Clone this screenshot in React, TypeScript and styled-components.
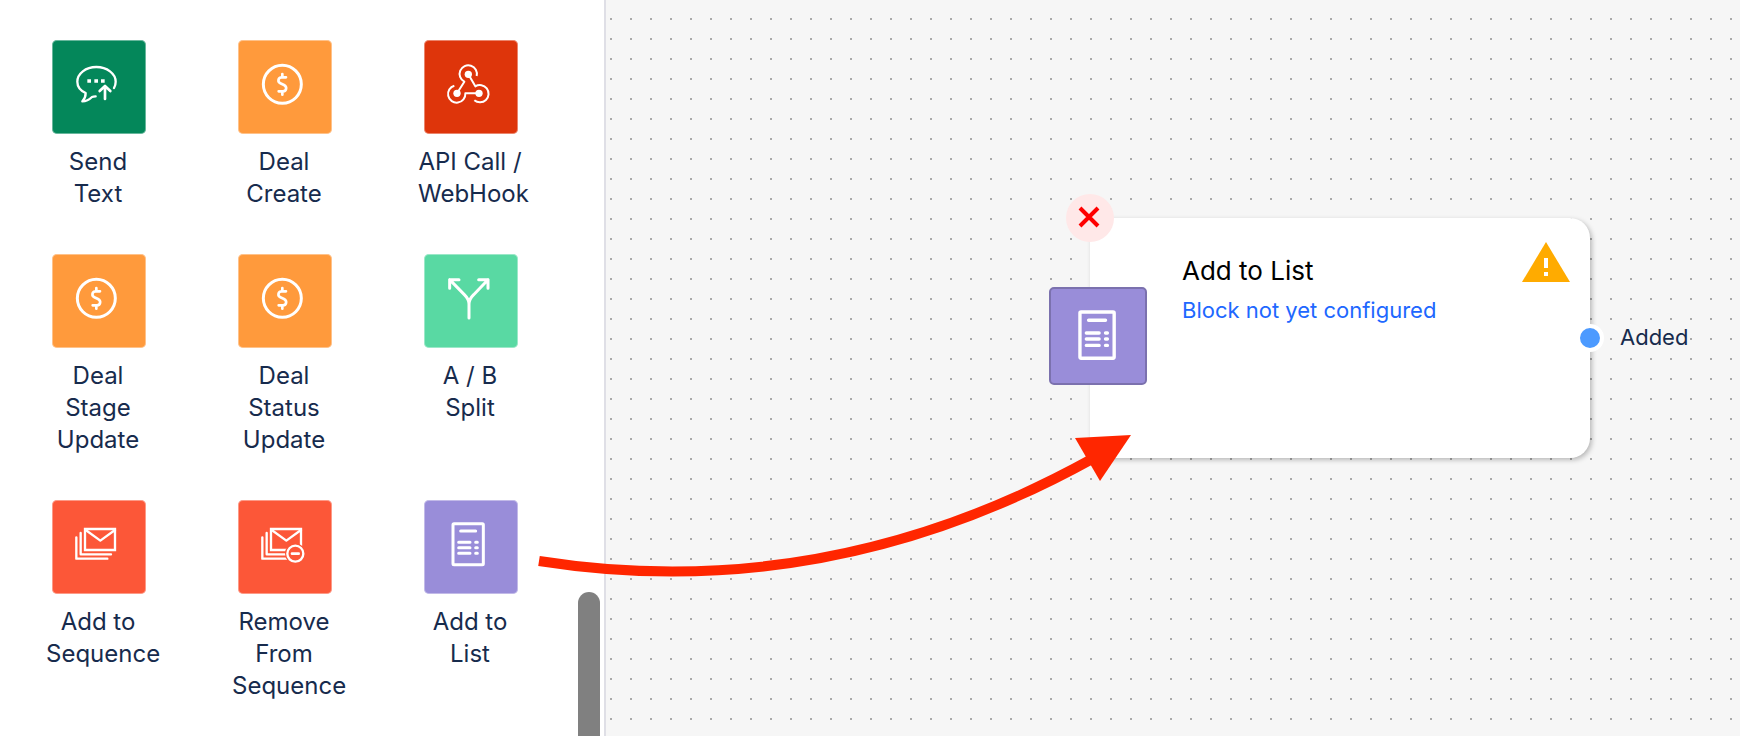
import React from "react";
import styled, { createGlobalStyle } from "styled-components";

const GlobalStyle = createGlobalStyle`
  *, *::before, *::after { box-sizing: border-box; }
  body {
    margin: 0;
    background: #ffffff;
    color: #172b4d;
    font-family: Inter, "Liberation Sans", sans-serif;
    font-size: 24px;
    line-height: 32px;
  }
`;

const Page = styled.div`
  position: relative;
  display: flex;
  min-height: 100vh;
  overflow: hidden;
`;

const Sidebar = styled.aside`
  display: flex;
  flex: none;
  justify-content: space-between;
  width: 606px;
  padding-right: 4px;
  border-right: 2px solid #dfdfe6;
  background: #ffffff;
`;

const BlockGrid = styled.ul`
  display: grid;
  grid-template-columns: repeat(3, 106px);
  align-content: start;
  gap: 44px 80px;
  margin: 0;
  padding: 40px 0 32px 46px;
  list-style: none;
`;

const BlockButton = styled.button`
  display: flex;
  flex-direction: column;
  align-items: center;
  gap: 12px;
  width: 100%;
  padding: 0;
  border: 0;
  background: none;
  color: inherit;
  font: inherit;
  cursor: grab;
`;

const Tile = styled.span<{ $color: string }>`
  display: block;
  width: 94px;
  height: 94px;
  border-radius: 5px;
  background: ${(p) => p.$color};
  box-shadow: inset 0 0 0 1px rgba(255, 255, 255, 0.4);
`;

const BlockLabel = styled.span`
  display: block;
  width: 100%;
  padding-right: 2px;
  text-align: center;
  white-space: pre;
`;

const ScrollThumb = styled.div`
  align-self: flex-end;
  width: 22px;
  height: 144px;
  border-radius: 11px 11px 0 0;
  background: #808080;
`;

const Canvas = styled.main`
  position: relative;
  flex: 1;
  min-width: 0;
  background-color: #f6f6f6;
  background-image: conic-gradient(from 270deg at 2px 2px, #aaaaaa 90deg, transparent 0);
  background-position: 4px 18px;
  background-size: 20px 20px;
`;

const Node = styled.section`
  position: absolute;
  top: 218px;
  left: 484px;
  display: flex;
  justify-content: space-between;
  width: 500px;
  height: 240px;
  padding: 24px 20px 24px 92px;
  border-radius: 20px;
  background: #ffffff;
  box-shadow: 2px 2px 5px rgba(0, 0, 0, 0.25);
`;

const NodeText = styled.div`
  display: flex;
  flex-direction: column;
  gap: 6px;
  padding-top: 12px;
`;

const NodeTitle = styled.h2`
  margin: 0;
  color: #000000;
  font-size: 26px;
  font-weight: 400;
  line-height: 34px;
`;

const NodeStatus = styled.p`
  margin: 0;
  color: #2067ff;
  font-size: 22px;
`;

const NodeTile = styled.div`
  position: absolute;
  top: 69px;
  left: -41px;
  width: 98px;
  height: 98px;
  border: 2px solid #7b71ae;
  border-radius: 5px;
  background: #998dd9;
`;

const RemoveButton = styled.button`
  position: absolute;
  top: -24px;
  left: -24px;
  width: 48px;
  height: 48px;
  padding: 0;
  border: 0;
  border-radius: 50%;
  background: #ffe8e8;
  cursor: pointer;
`;

const Port = styled.span`
  position: absolute;
  top: 106px;
  right: -14px;
  width: 28px;
  height: 28px;
  border: 4px solid #ffffff;
  border-radius: 50%;
  background: #4c9aff;
`;

const PortLabel = styled.span`
  position: absolute;
  top: 103px;
  left: 530px;
  background: #f6f6f6;
  font-size: 22px;
`;

const ArrowLayer = styled.svg`
  position: absolute;
  top: 0;
  left: 0;
  pointer-events: none;
`;

const Drawing = styled.svg`
  display: block;
  fill: none;
  stroke: #ffffff;
  stroke-linecap: round;
  stroke-linejoin: round;
`;

type IconName = "text" | "deal" | "webhook" | "split" | "sequence" | "unsequence" | "list";

const envelopes = (
  <g strokeWidth="7">
    <path d="M99 87H189V150H99Z" strokeLinejoin="miter" />
    <path d="M101 90L145 122L189 90" />
    <path d="M86 99V163H177" />
    <path d="M73 112V176H166" />
  </g>
);

const shapes: Record<IconName, React.ReactNode> = {
  text: (
    <g strokeWidth="7">
      <path d="M186 144Q191 135 191 125C191 101 165 81 133 81S76 101 76 125C76 140 86 152 101 159Q101 174 91 184Q107 184 120 171Q124 169 131 169" />
      <path d="M159 177V139M143 153L159 138L175 153" strokeWidth="8" />
      <path d="M106 118h11v10h-11zM127 118h11v10h-11zM147 118h11v10h-11z" fill="#ffffff" stroke="none" />
    </g>
  ),
  deal: (
    <g>
      <circle cx="133" cy="133" r="57" strokeWidth="9" />
      <path
        d="M133 102V111M144 112H131C120 112 118 126 127 130L138 135C148 140 146 154 135 154H122M133 156V164"
        strokeWidth="8"
      />
    </g>
  ),
  webhook: (
    <g strokeWidth="6" strokeLinecap="butt">
      <path d="M158 108A26 26 0 1 0 121 125L99 160" />
      <path d="M91 137A26 26 0 1 0 124 160H165" />
      <path d="M151 181A26 26 0 1 0 154 139L133 103" />
      <g fill="#ffffff" stroke="none">
        <circle cx="133" cy="103" r="11" />
        <circle cx="99" cy="160" r="11" />
        <circle cx="165" cy="160" r="11" />
      </g>
    </g>
  ),
  split: (
    <path
      d="M135 192V150C135 137 129 130 121 122L77 77M105 77H77V103M135 150C135 137 141 130 149 122L192 77M164 77H192V103"
      strokeWidth="9"
    />
  ),
  sequence: envelopes,
  unsequence: (
    <g>
      {envelopes}
      <circle cx="172" cy="161" r="31" fill="#fc5738" stroke="none" />
      <circle cx="172" cy="161" r="24" strokeWidth="7" />
      <path d="M162 161H182" strokeWidth="8" />
    </g>
  ),
  list: (
    <g strokeWidth="9">
      <rect x="87" y="71" width="91" height="123" rx="3" />
      <path d="M110 93H155M104 127H138M104 143H138M104 160H138M155 127H160M155 143H160M155 160H160" />
    </g>
  ),
};

const Icon = ({ name, viewBox = "0 0 282 282" }: { name: IconName; viewBox?: string }) => (
  <Drawing width="94" height="94" viewBox={viewBox} aria-hidden="true">
    {shapes[name]}
  </Drawing>
);

const blocks: { label: string; color: string; icon: IconName }[] = [
  { label: "Send\nText", color: "#04875a", icon: "text" },
  { label: "Deal\nCreate", color: "#ff9a3c", icon: "deal" },
  { label: "API Call /\nWebHook", color: "#de350b", icon: "webhook" },
  { label: "Deal\nStage\nUpdate", color: "#ff9a3c", icon: "deal" },
  { label: "Deal\nStatus\nUpdate", color: "#ff9a3c", icon: "deal" },
  { label: "A / B\nSplit", color: "#59d9a3", icon: "split" },
  { label: "Add to\nSequence", color: "#fc5738", icon: "sequence" },
  { label: "Remove\nFrom\nSequence", color: "#fc5738", icon: "unsequence" },
  { label: "Add to\nList", color: "#998dd9", icon: "list" },
];

export default function App() {
  return (
    <>
      <GlobalStyle />
      <Page>
        <Sidebar>
          <BlockGrid>
            {blocks.map((block) => (
              <li key={block.label}>
                <BlockButton type="button">
                  <Tile $color={block.color}>
                    <Icon name={block.icon} />
                  </Tile>
                  <BlockLabel>{block.label}</BlockLabel>
                </BlockButton>
              </li>
            ))}
          </BlockGrid>
          <ScrollThumb />
        </Sidebar>
        <Canvas>
          <Node>
            <NodeText>
              <NodeTitle>Add to List</NodeTitle>
              <NodeStatus>Block not yet configured</NodeStatus>
            </NodeText>
            <svg width="48" height="40" viewBox="0 0 48 40" role="img" aria-label="Warning">
              <path d="M24 0L48 40H0Z" fill="#ffab00" />
              <path d="M22 16h4v10h-4zM22 30h4v4h-4z" fill="#ffffff" />
            </svg>
            <NodeTile>
              <Icon name="list" viewBox="10 10 250 250" />
            </NodeTile>
            <RemoveButton type="button" aria-label="Remove block">
              <svg width="48" height="48" viewBox="0 0 48 48" aria-hidden="true">
                <path d="M14 14L32 32M32 14L14 32" stroke="#ff0000" strokeWidth="4" />
              </svg>
            </RemoveButton>
            <Port />
            <PortLabel>Added</PortLabel>
          </Node>
        </Canvas>
        <ArrowLayer width="1140" height="600" viewBox="0 0 1140 600" aria-hidden="true">
          <path d="M539 561Q826 606 1092 459" fill="none" stroke="#ff2600" strokeWidth="10" />
          <path d="M1131 435L1075 438L1100 481Z" fill="#ff2600" />
        </ArrowLayer>
      </Page>
    </>
  );
}
